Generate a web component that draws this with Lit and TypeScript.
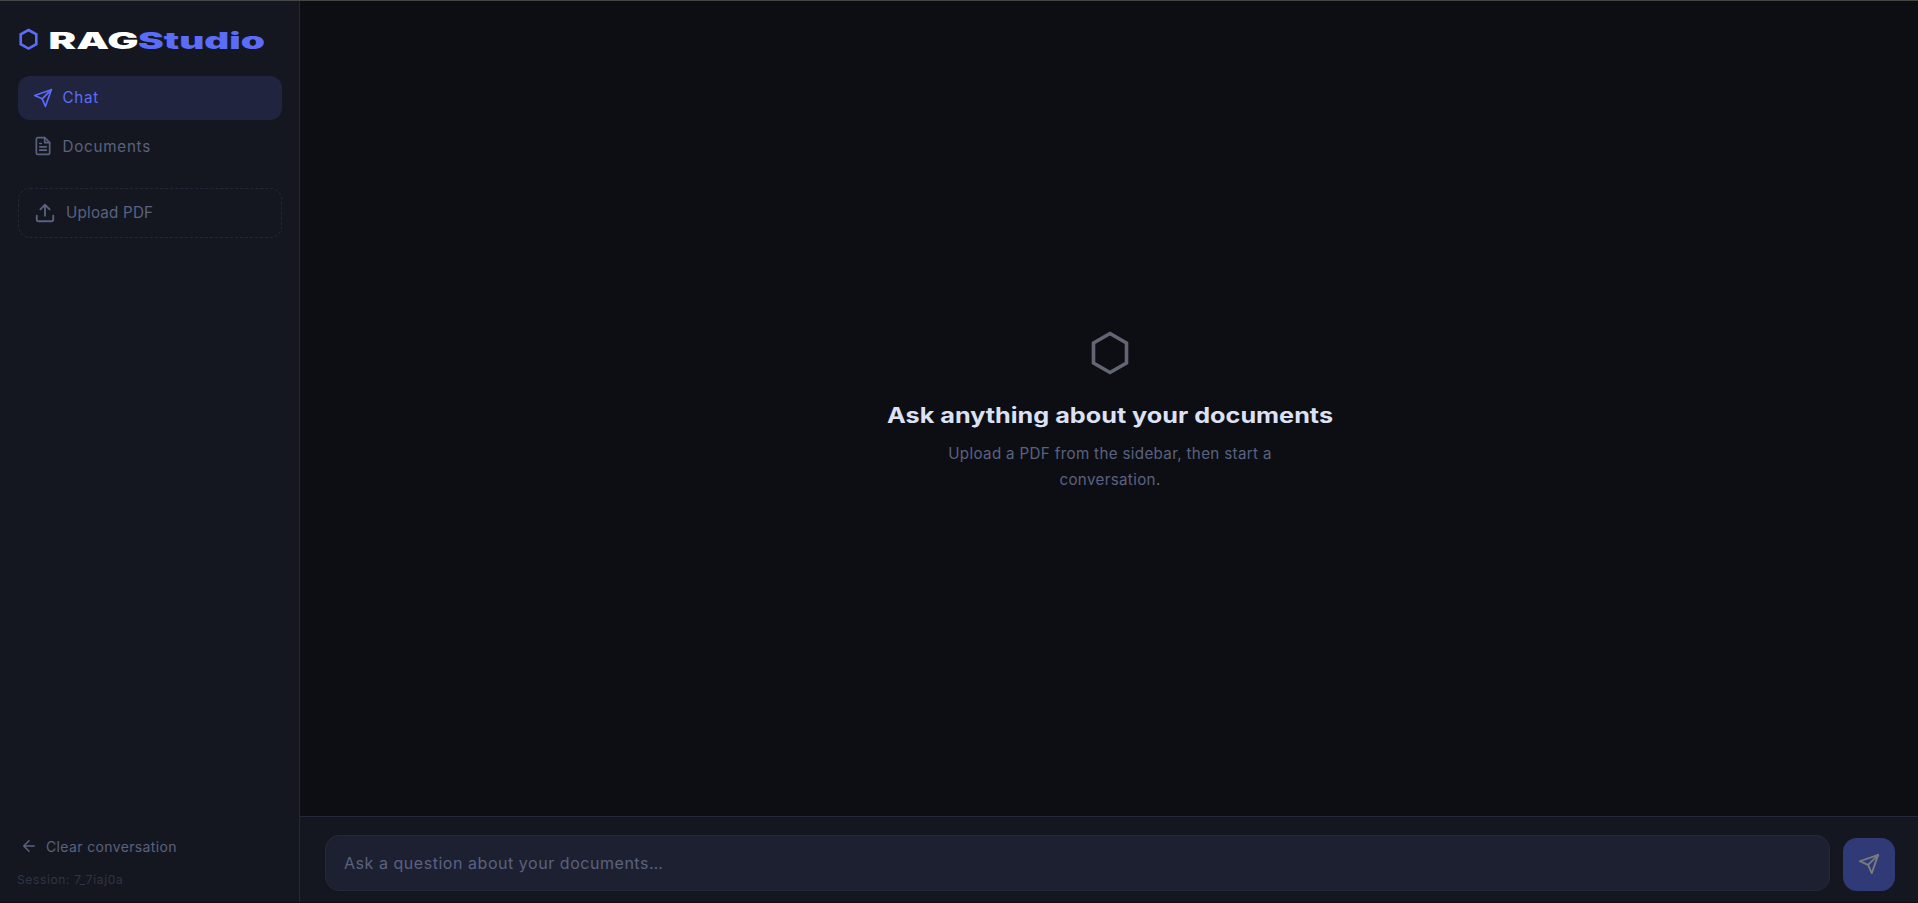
import { LitElement, html, css, svg } from "lit";
import { customElement, state } from "lit/decorators.js";

const icons = {
  send: svg`<path d="M22 2 11 13"/><path d="M22 2l-7 20-4-9-9-4z"/>`,
  file: svg`<path d="M14 2H6a2 2 0 0 0-2 2v16a2 2 0 0 0 2 2h12a2 2 0 0 0 2-2V8z"/><path d="M14 2v6h6M16 13H8M16 17H8M10 9H8"/>`,
  upload: svg`<path d="M21 15v4a2 2 0 0 1-2 2H5a2 2 0 0 1-2-2v-4"/><path d="M17 8l-5-5-5 5M12 3v12"/>`,
  back: svg`<path d="M19 12H5M12 19l-7-7 7-7"/>`,
};

const icon = (name: keyof typeof icons, size: number) => html`
  <svg class="icon" width=${size} height=${size} viewBox="0 0 24 24">${icons[name]}</svg>`;

@customElement("app-root")
export class AppRoot extends LitElement {
  static styles = css`
    :host {
      display: block;
      height: 100vh;
      box-sizing: border-box;
      border-top: 1px solid #454745;
      border-bottom: 1px solid #0d0e13;
      background: #0d0e13;
      color: #dde1f5;
      font-family: Inter, "DM Sans", sans-serif;
      font-size: 15.2px;
      overflow: hidden;
    }
    * { box-sizing: border-box; }
    .app { display: grid; grid-template-columns: 300px 1fr; height: 100%; }
    .icon {
      fill: none;
      stroke: currentColor;
      stroke-width: 2;
      stroke-linecap: round;
      stroke-linejoin: round;
      flex: none;
      display: block;
    }
    button { font: inherit; margin: 0; border: 0; background: none; text-align: left; color: #5a6280; }
    .sidebar {
      display: flex;
      flex-direction: column;
      background: #14171f;
      border-right: 1px solid #252838;
      padding: 18px 17px 14px 18px;
    }
    .logo { display: flex; align-items: center; height: 40px; margin-bottom: 17px; }
    .logo-mark { display: block; width: 21px; height: 24px; fill: none; stroke: #5b6cf9; stroke-width: 2.6; }
    .wordmark {
      display: block;
      width: 218px;
      height: 32px;
      margin-left: 9px;
      font-size: 22.5px;
      font-weight: 900;
      fill: #fff;
      overflow: visible;
    }
    .wordmark .accent { fill: #5b6cf9; }
    nav { display: flex; flex-direction: column; gap: 4px; }
    .nav-item {
      display: flex;
      align-items: center;
      gap: 9.5px;
      height: 44px;
      padding: 0 15px;
      border-radius: 12px;
      letter-spacing: 0.75px;
    }
    .nav-item.active { background: #20243e; color: #5b6cf9; padding-bottom: 1px; }
    .upload {
      display: flex;
      align-items: center;
      gap: 10px;
      height: 50px;
      margin-top: 20px;
      padding: 0 15px 1px;
      border: 1px dashed #252838;
      border-radius: 12px;
      letter-spacing: 0.2px;
    }
    .bottom { margin-top: auto; }
    .clear { display: flex; align-items: center; gap: 8px; padding: 0 2px; font-size: 14px; height: 34px; letter-spacing: 0.36px; }
    .session { font-size: 12px; line-height: 16px; letter-spacing: 0.64px; color: #303546; margin: 9px 0 0 -1px; }
    .main { display: flex; flex-direction: column; min-width: 0; }
    .empty {
      flex: 1;
      display: flex;
      flex-direction: column;
      align-items: center;
      padding: 329px 0 0 2px;
    }
    .hex { display: block; width: 40px; height: 46px; fill: none; stroke: #626674; stroke-width: 3.6; }
    .title { display: block; width: 446px; height: 32px; margin-top: 25px; font-size: 21px; font-weight: 700; fill: #dde1f5; overflow: visible; }
    .hint { margin: 8px 0 0; width: 340px; text-align: center; line-height: 26px; color: #5a6280; letter-spacing: 0.32px; }
    .composer {
      display: flex;
      align-items: flex-end;
      gap: 13px;
      height: 86px;
      padding: 0 23px 11px 25px;
      background: #14171f;
      border-top: 1px solid #252838;
    }
    .field {
      flex: 1;
      min-width: 0;
      height: 56px;
      padding: 0 18px;
      border: 1px solid #252838;
      border-radius: 14px;
      background: #1d2030;
      color: #dde1f5;
      font: inherit;
      font-size: 16px;
      letter-spacing: 0.54px;
      outline: none;
    }
    .field::placeholder { color: #5a6280; opacity: 1; }
    .send {
      display: grid;
      place-items: center;
      width: 52px;
      height: 53px;
      padding: 0 0 1px;
      border-radius: 14px;
      background: #303a76;
      color: #7b7c80;
    }
  `;

  @state() private view: "chat" | "documents" = "chat";

  private navItem(view: "chat" | "documents", glyph: keyof typeof icons, label: string) {
    return html`<button class="nav-item ${this.view === view ? "active" : ""}" @click=${() => (this.view = view)}>
      ${icon(glyph, 20)}<span>${label}</span>
    </button>`;
  }

  render() {
    return html`
      <div class="app">
        <aside class="sidebar">
          <div class="logo">
            <svg class="logo-mark" viewBox="0 0 21 24"><path d="M10.5 3 18.300 7.300v9.900l-7.800 4.400-7.800-4.400V7.300z"/></svg>
            <svg class="wordmark" viewBox="0 0 218 32">
              <text x="0.500" y="25.500" textLength="90" lengthAdjust="spacingAndGlyphs">RAG</text>
              <text class="accent" x="90" y="25.500" textLength="127" lengthAdjust="spacingAndGlyphs">Studio</text>
            </svg>
          </div>
          <nav>
            ${this.navItem("chat", "send", "Chat")}
            ${this.navItem("documents", "file", "Documents")}
          </nav>
          <button class="upload">${icon("upload", 22)}<span>Upload PDF</span></button>
          <div class="bottom">
            <button class="clear">${icon("back", 18)}<span>Clear conversation</span></button>
            <div class="session">Session: 7_7iaj0a</div>
          </div>
        </aside>
        <main class="main">
          <section class="empty">
            <svg class="hex" viewBox="0 0 40 46"><path d="M20 3.500 36.500 13v20L20 42.500 3.500 33V13z"/></svg>
            <svg class="title" viewBox="0 0 446 32">
              <text x="0" y="22" textLength="446" lengthAdjust="spacingAndGlyphs">Ask anything about your documents</text>
            </svg>
            <p class="hint">Upload a PDF from the sidebar, then start a conversation.</p>
          </section>
          <div class="composer">
            <input class="field" placeholder="Ask a question about your documents…" />
            <button class="send">${icon("send", 22)}</button>
          </div>
        </main>
      </div>
    `;
  }
}
